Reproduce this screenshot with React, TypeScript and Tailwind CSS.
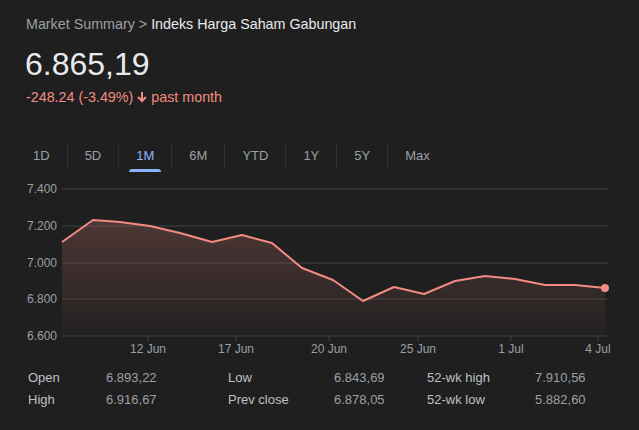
import React from "react";

const pts: [number, number][] = [[62,240],[93,218],[120,220],[150,224],[180,231],[212,240],[242,233],[272,241],[302,266],[333,278],[363,299],[394,285],[424,292],[455,279],[485,274],[515,277],[545,283],[575,283],[605,286]];

export default function App() {
  const line = pts.map((p, i) => `${i ? "L" : "M"}${p[0]},${p[1] - 176}`).join(" ");
  const area = `${line} L605,158 L62,158 Z`;
  const tabs = ["1D", "5D", "1M", "6M", "YTD", "1Y", "5Y", "Max"];
  const grid = [[7.4, 187], [7.2, 224], [7.0, 261], [6.8, 297], [6.6, 334]];
  const xl = [["12 Jun", 148], ["17 Jun", 236], ["20 Jun", 329], ["25 Jun", 418], ["1 Jul", 511], ["4 Jul", 598]];
  const stats = [["Open", "6.893,22", "Low", "6.843,69", "52-wk high", "7.910,56"], ["High", "6.916,67", "Prev close", "6.878,05", "52-wk low", "5.882,60"]];
  return (
    <div className="w-[639px] h-[430px] bg-[#1f1f1f] overflow-hidden" style={{ fontFamily: "Arial, 'Liberation Sans', sans-serif" }}>
      <div className="pt-[15px] pl-[26px] text-[14.3px] leading-[18px]">
        <span className="text-[#9aa0a6]">Market Summary &gt; </span>
        <span className="text-[#e8eaed]">Indeks Harga Saham Gabungan</span>
      </div>
      <div className="pl-[25px] mt-[12px] text-[32px] leading-[38px] text-[#e8eaed]">6.865,19</div>
      <div className="pl-[26px] mt-[5px] text-[14.3px] leading-[18px] text-[#f28b82] flex items-center">
        -248.24 (-3.49%)
        <svg width="12" height="12" viewBox="0 0 12 12" className="mx-[3px]"><path d="M6 1v8M2 6l4 4 4-4" stroke="#f28b82" strokeWidth="2" fill="none" /></svg>
        past month
      </div>
      <div className="flex pl-[16px] mt-[36px] h-[28px] items-stretch">
        {tabs.map((t, i) => (
          <div key={t} className="flex items-stretch">
            {i > 0 && <div className="w-px bg-[#2e2f31] my-[2px]" />}
            <div className={`relative px-[17px] flex items-center text-[13px] ${t === "1M" ? "text-[#8ab4f8]" : "text-[#9aa0a6]"}`}>
              {t}
              {t === "1M" && <div className="absolute left-[10px] right-[10px] bottom-[-2px] h-[3px] rounded-t bg-[#8ab4f8]" />}
            </div>
          </div>
        ))}
      </div>
      <svg width="639" height="180" className="block mt-[8px]" style={{ fontFamily: "Arial, 'Liberation Sans', sans-serif" }}>
        <defs>
          <linearGradient id="g" x1="0" y1="0" x2="0" y2="1">
            <stop offset="0" stopColor="#f28b82" stopOpacity="0.22" />
            <stop offset="1" stopColor="#f28b82" stopOpacity="0.02" />
          </linearGradient>
        </defs>
        {grid.map(([v, y]) => (
          <g key={y}>
            <line x1="62" x2="609" y1={y - 176} y2={y - 176} stroke="#3c4043" strokeWidth="1" />
            <text x="27" y={y - 176 + 4} fontSize="12" fill="#9aa0a6">{v.toFixed(3)}</text>
          </g>
        ))}
        <path d={area} fill="url(#g)" />
        <path d={line} fill="none" stroke="#f28b82" strokeWidth="2" strokeLinejoin="round" />
        <circle cx="605" cy={286 - 176} r="4" fill="#f28b82" />
        {xl.map(([t, x]) => (
          <g key={t as string}>
            <line x1={x as number} x2={x as number} y1="158" y2="163" stroke="#3c4043" />
            <text x={x as number} y="175" fontSize="12" fill="#9aa0a6" textAnchor="middle">{t}</text>
          </g>
        ))}
      </svg>
      <div className="mt-[9px] text-[13px] leading-[22px]">
        {stats.map((r) => (
          <div key={r[0]} className="flex">
            <span className="w-[80px] pl-[28px] text-[#bdc1c6]">{r[0]}</span>
            <span className="w-[148px] pl-[26px] text-[#9aa0a6]">{r[1]}</span>
            <span className="w-[106px] text-[#bdc1c6]">{r[2]}</span>
            <span className="w-[93px] text-[#9aa0a6]">{r[3]}</span>
            <span className="w-[108px] text-[#bdc1c6]">{r[4]}</span>
            <span className="text-[#9aa0a6]">{r[5]}</span>
          </div>
        ))}
      </div>
    </div>
  );
}
